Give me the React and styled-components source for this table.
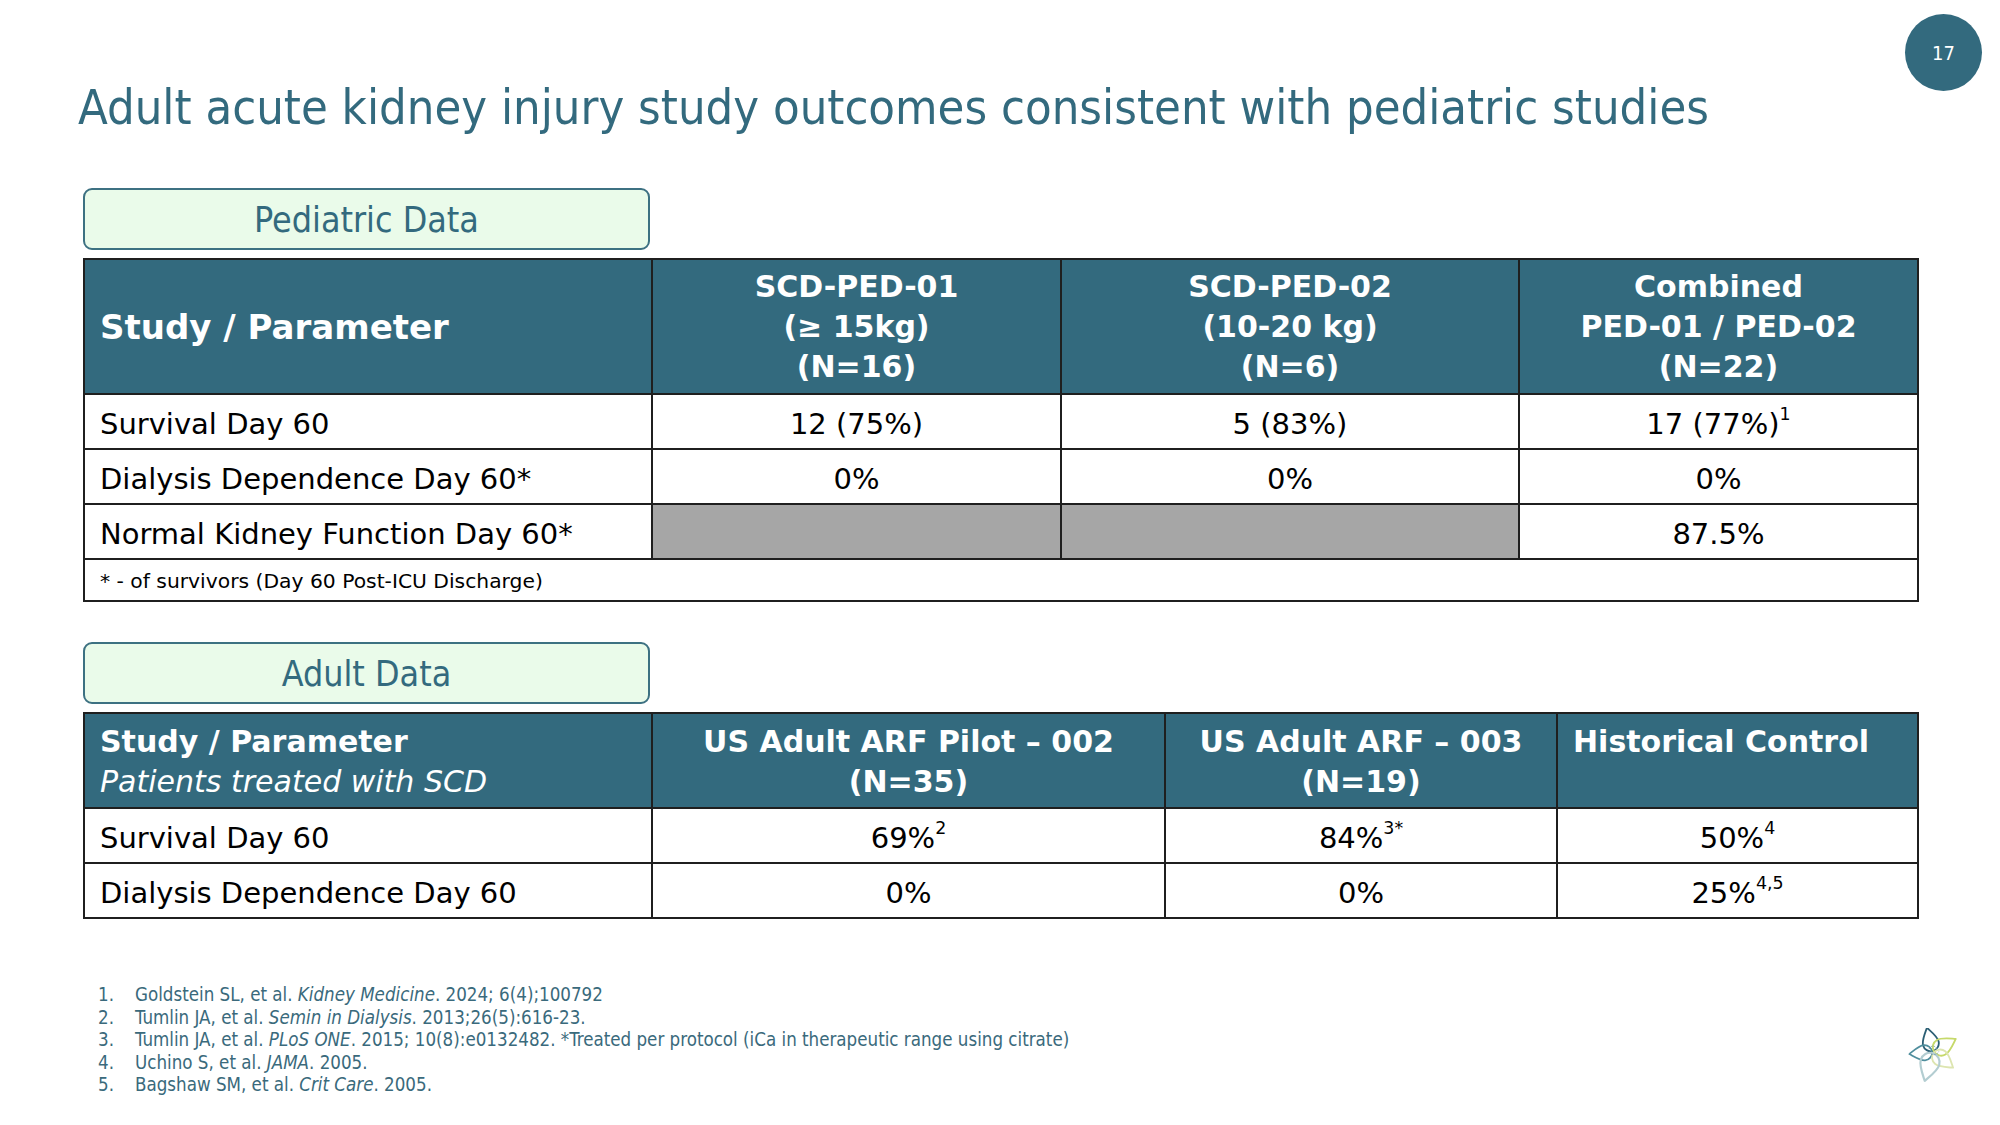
import React from "react";
import styled, { createGlobalStyle } from "styled-components";

const TEAL = "#336a7e";
const LINE = "#1f1f1f";

const GlobalStyle = createGlobalStyle`
  html, body {
    margin: 0;
    padding: 0;
    background: #ffffff;
  }
  body {
    font-family: "DejaVu Sans", "Noto Sans", sans-serif;
    color: #000000;
  }
`;

const Slide = styled.div`
  position: relative;
  box-sizing: border-box;
  width: 2000px;
  height: 1125px;
  padding: 78px 83px 0 83px;
  display: flex;
  flex-direction: column;
  overflow: hidden;
  background: #ffffff;
`;

const PageBadge = styled.div`
  position: absolute;
  top: 14px;
  right: 18px;
  width: 77px;
  height: 77px;
  border-radius: 50%;
  background: ${TEAL};
  color: #ffffff;
  display: flex;
  align-items: center;
  justify-content: center;
  font-family: "DejaVu Sans Condensed", "DejaVu Sans", sans-serif;
  font-stretch: condensed;
  font-size: 20px;
`;

const Title = styled.h1`
  margin: 0 0 0 -5px;
  font-family: "DejaVu Sans Condensed", "DejaVu Sans", sans-serif;
  font-stretch: condensed;
  font-weight: normal;
  font-size: 48.5px;
  line-height: 58px;
  color: ${TEAL};
  white-space: nowrap;
`;

const Section = styled.section`
  margin-top: ${({ $gap }) => $gap}px;
  display: flex;
  flex-direction: column;
  gap: 8px;
`;

const Tab = styled.div`
  box-sizing: border-box;
  width: 567px;
  height: 62px;
  border: 2px solid #3d7182;
  border-radius: 9px;
  background: #eafbea;
  display: flex;
  align-items: center;
  justify-content: center;
  font-family: "DejaVu Sans Condensed", "DejaVu Sans", sans-serif;
  font-stretch: condensed;
  font-size: 35.5px;
  color: ${TEAL};
`;

const Table = styled.table`
  width: 1834px;
  table-layout: fixed;
  border-collapse: collapse;
  border: 2px solid ${LINE};
`;

const Row = styled.tr`
  height: ${({ $h }) => $h}px;
`;

const HeadCell = styled.th`
  box-sizing: border-box;
  background: ${TEAL};
  color: #ffffff;
  border: 2px solid ${LINE};
  padding: ${({ $top }) => ($top ? "8px 15px 0 15px" : "0 15px")};
  vertical-align: ${({ $top }) => ($top ? "top" : "middle")};
  text-align: ${({ $left }) => ($left ? "left" : "center")};
  font-weight: bold;
  font-size: ${({ $big }) => ($big ? 34 : 30)}px;
  line-height: 40px;
  white-space: nowrap;
`;

const SubHead = styled.span`
  display: block;
  font-weight: normal;
  font-style: italic;
`;

const Cell = styled.td`
  box-sizing: border-box;
  border: 2px solid ${LINE};
  background: ${({ $gray }) => ($gray ? "#a6a6a6" : "#ffffff")};
  padding: 4px 15px 0 15px;
  vertical-align: middle;
  text-align: ${({ $left }) => ($left ? "left" : "center")};
  font-size: 29px;
  line-height: 40px;
  white-space: nowrap;
`;

const NoteCell = styled.td`
  border: 2px solid ${LINE};
  padding: 2px 15px 0 15px;
  vertical-align: middle;
  font-size: 20.3px;
  line-height: 28px;
`;

const Sup = styled.sup`
  font-size: 0.6em;
  line-height: 0;
  vertical-align: baseline;
  position: relative;
  top: -0.75em;
`;

const Footer = styled.div`
  margin-top: 65px;
  display: flex;
  justify-content: space-between;
  align-items: flex-end;
`;

const Notes = styled.ol`
  margin: 0 0 0 15px;
  padding: 0;
  list-style: none;
  font-family: "DejaVu Sans Condensed", "DejaVu Sans", sans-serif;
  font-stretch: condensed;
  font-size: 18.6px;
  line-height: 22.5px;
  color: #3a6a7c;
`;

const Note = styled.li`
  display: flex;
  white-space: nowrap;
`;

const NoteNum = styled.span`
  width: 37px;
  flex: none;
`;

const Logo = styled.svg`
  margin: 0 -41px 13px 0;
  flex: none;
`;

const pedCols = [568, 409, 458, 399];
const adultCols = [568, 513, 392, 361];

const petals = [
  { a: -14, s: 1, c: "#2c5f74" },
  { a: -95, s: 0.95, c: "#4f8e9d" },
  { a: 60, s: 1.05, c: "#c6d96a" },
  { a: 128, s: 1.02, c: "#dde5b0" },
  { a: 196, s: 1.2, c: "#b3cdd1" },
];

const FlowerLogo = () => (
  <Logo width="50" height="56" viewBox="0 0 50 56">
    <g transform="translate(25 24)">
      {petals.map((p) => (
        <path
          key={p.a}
          transform={`rotate(${p.a}) scale(${p.s})`}
          d="M0,-25 C4,-19 8,-14 8,-9 A8,8 0 0 1 -8,-9 C-8,-14 -4,-19 0,-25 Z"
          fill="none"
          stroke={p.c}
          strokeWidth="1.8"
          strokeLinejoin="round"
        />
      ))}
      <path
        d="M-4,-3 Q0,-9 4,-3 M-2,2 Q4,4 6,-1"
        fill="none"
        stroke="#7a9fa8"
        strokeWidth="1"
        strokeDasharray="1.5 1.5"
      />
    </g>
  </Logo>
);

const Cols = ({ widths }) => (
  <colgroup>
    {widths.map((w, i) => (
      <col key={i} style={{ width: w }} />
    ))}
  </colgroup>
);

export default function App() {
  return (
    <>
      <GlobalStyle />
      <Slide>
        <PageBadge>17</PageBadge>
        <Title>
          Adult acute kidney injury study outcomes consistent with pediatric
          studies
        </Title>

        <Section $gap={52}>
          <Tab>Pediatric Data</Tab>
          <Table>
            <Cols widths={pedCols} />
            <thead>
              <Row $h={135}>
                <HeadCell $left $big>
                  Study / Parameter
                </HeadCell>
                <HeadCell>
                  SCD-PED-01
                  <br />
                  (≥ 15kg)
                  <br />
                  (N=16)
                </HeadCell>
                <HeadCell>
                  SCD-PED-02
                  <br />
                  (10-20 kg)
                  <br />
                  (N=6)
                </HeadCell>
                <HeadCell>
                  Combined
                  <br />
                  PED-01 / PED-02
                  <br />
                  (N=22)
                </HeadCell>
              </Row>
            </thead>
            <tbody>
              <Row $h={55}>
                <Cell $left>Survival Day 60</Cell>
                <Cell>12 (75%)</Cell>
                <Cell>5 (83%)</Cell>
                <Cell>
                  17 (77%)<Sup>1</Sup>
                </Cell>
              </Row>
              <Row $h={55}>
                <Cell $left>Dialysis Dependence Day 60*</Cell>
                <Cell>0%</Cell>
                <Cell>0%</Cell>
                <Cell>0%</Cell>
              </Row>
              <Row $h={55}>
                <Cell $left>Normal Kidney Function Day 60*</Cell>
                <Cell $gray />
                <Cell $gray />
                <Cell>87.5%</Cell>
              </Row>
              <Row $h={42}>
                <NoteCell colSpan={4}>
                  * - of survivors (Day 60 Post-ICU Discharge)
                </NoteCell>
              </Row>
            </tbody>
          </Table>
        </Section>

        <Section $gap={40}>
          <Tab>Adult Data</Tab>
          <Table>
            <Cols widths={adultCols} />
            <thead>
              <Row $h={95}>
                <HeadCell $left $top>
                  Study / Parameter
                  <SubHead>Patients treated with SCD</SubHead>
                </HeadCell>
                <HeadCell $top>
                  US Adult ARF Pilot – 002
                  <br />
                  (N=35)
                </HeadCell>
                <HeadCell $top>
                  US Adult ARF – 003
                  <br />
                  (N=19)
                </HeadCell>
                <HeadCell $top $left>
                  Historical Control
                </HeadCell>
              </Row>
            </thead>
            <tbody>
              <Row $h={55}>
                <Cell $left>Survival Day 60</Cell>
                <Cell>
                  69%<Sup>2</Sup>
                </Cell>
                <Cell>
                  84%<Sup>3*</Sup>
                </Cell>
                <Cell>
                  50%<Sup>4</Sup>
                </Cell>
              </Row>
              <Row $h={55}>
                <Cell $left>Dialysis Dependence Day 60</Cell>
                <Cell>0%</Cell>
                <Cell>0%</Cell>
                <Cell>
                  25%<Sup>4,5</Sup>
                </Cell>
              </Row>
            </tbody>
          </Table>
        </Section>

        <Footer>
          <Notes>
            <Note>
              <NoteNum>1.</NoteNum>
              <span>
                Goldstein SL, et al. <i>Kidney Medicine</i>. 2024; 6(4);100792
              </span>
            </Note>
            <Note>
              <NoteNum>2.</NoteNum>
              <span>
                Tumlin JA, et al. <i>Semin in Dialysis</i>.
                2013;26(5):616-23.
              </span>
            </Note>
            <Note>
              <NoteNum>3.</NoteNum>
              <span>
                Tumlin JA, et al. <i>PLoS ONE</i>. 2015; 10(8):e0132482.
                *Treated per protocol (iCa in therapeutic range using citrate)
              </span>
            </Note>
            <Note>
              <NoteNum>4.</NoteNum>
              <span>
                Uchino S, et al. <i>JAMA</i>. 2005.
              </span>
            </Note>
            <Note>
              <NoteNum>5.</NoteNum>
              <span>
                Bagshaw SM, et al. <i>Crit Care</i>. 2005.
              </span>
            </Note>
          </Notes>
          <FlowerLogo />
        </Footer>
      </Slide>
    </>
  );
}
